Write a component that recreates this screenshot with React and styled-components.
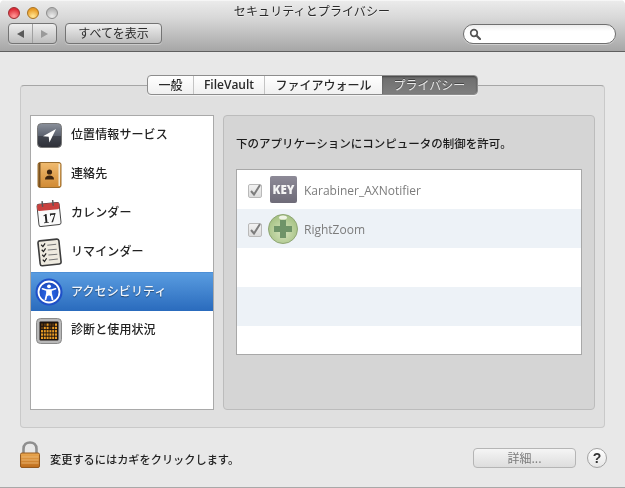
import React from 'react'
import styled, { createGlobalStyle } from 'styled-components'

const GlobalStyle = createGlobalStyle`
  html, body {
    margin: 0;
    padding: 0;
    background: #fff;
  }
  body {
    font-family: "Noto Sans CJK JP", "Liberation Sans", sans-serif;
  }
`

const Window = styled.div`
  width: 625px;
  height: 488px;
  display: flex;
  flex-direction: column;
  background: #e8e8e8;
  border-radius: 5px 5px 0 0;
  overflow: hidden;
  box-sizing: border-box;
  border-bottom: 1px solid #a8a8a8;
  filter: blur(0.3px);
`

const TitleBar = styled.div`
  height: 52px;
  flex: none;
  box-sizing: border-box;
  padding: 2px 9px 0 8px;
  background: linear-gradient(#ececec 0%, #d8d8d8 35%, #a6a6a6 100%);
  border-bottom: 1px solid #5f5f5f;
  box-shadow: inset 0 1px 0 #f6f6f6;
  display: flex;
  flex-direction: column;
`

const TitleRow = styled.div`
  height: 21px;
  display: flex;
  align-items: center;
`

const Lights = styled.div`
  display: flex;
  gap: 7px;
`

const Light = styled.span`
  width: 12px;
  height: 12px;
  border-radius: 50%;
  box-sizing: border-box;
  border: 1px solid ${p => p.$edge};
  background: radial-gradient(circle at 50% 85%, ${p => p.$glow} 10%, ${p => p.$color} 75%);
`

const Title = styled.div`
  flex: 1;
  text-align: center;
  font-size: 12px;
  letter-spacing: 0.1px;
  color: #2a2a2a;
  margin-right: 50px;
  margin-top: -5px;
  text-shadow: 0 1px 0 rgba(255, 255, 255, 0.5);
`

const ToolRow = styled.div`
  display: flex;
  align-items: center;
  height: 21px;
`

const NavGroup = styled.div`
  width: 49px;
  height: 21px;
  box-sizing: border-box;
  border: 1px solid #747474;
  border-radius: 4px;
  background: linear-gradient(#eeeeee, #bdbdbd);
  display: flex;
  box-shadow: 0 1px 0 rgba(255, 255, 255, 0.35);
`

const NavHalf = styled.div`
  flex: 1;
  display: flex;
  align-items: center;
  justify-content: center;
  & + & {
    border-left: 1px solid #a0a0a0;
  }
`

const Arrow = styled.span`
  width: 0;
  height: 0;
  border-top: 4px solid transparent;
  border-bottom: 4px solid transparent;
  ${p => (p.$right
    ? `border-left: 7px solid ${p.$color};`
    : `border-right: 7px solid ${p.$color};`)}
`

const ToolButton = styled.div`
  margin-left: 8px;
  width: 97px;
  height: 21px;
  box-sizing: border-box;
  border: 1px solid #747474;
  border-radius: 4px;
  background: linear-gradient(#eeeeee, #bdbdbd);
  box-shadow: 0 1px 0 rgba(255, 255, 255, 0.35);
  font-size: 12px;
  line-height: 18px;
  text-align: center;
  color: #2c2c2c;
`

const SearchBox = styled.div`
  margin-left: auto;
  width: 153px;
  height: 20px;
  box-sizing: border-box;
  border: 1px solid #6f6f6f;
  border-radius: 10px;
  background: linear-gradient(#ededed, #ffffff 35%);
  display: flex;
  align-items: center;
  padding-left: 5px;
  box-shadow: 0 1px 0 rgba(255, 255, 255, 0.4);
`

const Content = styled.div`
  flex: 1;
  display: flex;
  flex-direction: column;
  padding: 23px 20px 0;
`

const TabBar = styled.div`
  align-self: center;
  display: flex;
  height: 20px;
  margin: 0 0 -10px 0;
  position: relative;
  z-index: 1;
  box-sizing: border-box;
  border: 1px solid #8d8d8d;
  border-radius: 4px;
  background: linear-gradient(#ffffff, #f0f0f0);
  box-shadow: 0 1px 0 rgba(255, 255, 255, 0.6);
`

const Tab = styled.div`
  width: ${p => p.$width}px;
  font-family: ${p => (p.$latin ? '"Open Sans", sans-serif' : 'inherit')};
  font-size: 12px;
  font-weight: ${p => (p.$latin ? 600 : 500)};
  line-height: 17px;
  text-align: center;
  color: #2a2a2a;
  box-sizing: border-box;
  & + & {
    border-left: 1px solid #c4c4c4;
  }
  ${p => p.$active && `
    color: #e8e8e8;
    border-radius: 0 3px 3px 0;
    border-left: none !important;
    background: linear-gradient(#6d6d6d, #7f7f7f);
    box-shadow: inset 0 1px 2px rgba(0, 0, 0, 0.4);
    font-weight: 400;
    text-shadow: 0 -1px 0 rgba(0, 0, 0, 0.4);
  `}
`

const GroupBox = styled.div`
  height: 343px;
  box-sizing: border-box;
  padding: 29px 9px 0;
  border: 1px solid #c9c9c9;
  border-top-color: #a6a6a6;
  border-radius: 4px;
  background: #e0e0e0;
  display: flex;
  gap: 9px;
`

const Sidebar = styled.div`
  width: 184px;
  height: 295px;
  flex: none;
  box-sizing: border-box;
  border: 1px solid #a9a9a9;
  background: #fff;
`

const SideRow = styled.div`
  height: 39px;
  display: flex;
  align-items: center;
  padding-left: 4px;
  gap: 8px;
  font-size: 12px;
  font-weight: 500;
  letter-spacing: 0.1px;
  color: ${p => (p.$selected ? '#f2f6fb' : '#222')};
  ${p => p.$selected && `
    background: linear-gradient(#599ce0, #2a6bbd);
    border-top: 1px solid #4d8fd6;
    box-sizing: border-box;
    text-shadow: 0 1px 1px rgba(0, 0, 0, 0.45);
  `}
`

const SideLabel = styled.span`
  margin-bottom: 4px;
`

const IconSlot = styled.div`
  width: 28px;
  height: 28px;
  flex: none;
  display: flex;
  align-items: center;
  justify-content: center;
`

const RightPanel = styled.div`
  width: 372px;
  height: 295px;
  flex: none;
  box-sizing: border-box;
  padding: 0 12px;
  border: 1px solid #bcbcbc;
  border-radius: 4px;
  background: #d5d5d5;
`

const PanelLabel = styled.div`
  height: 53px;
  box-sizing: border-box;
  padding-top: 18px;
  font-size: 11.5px;
  font-weight: 500;
  color: #1c1c1c;
  line-height: 18px;
`

const AppTable = styled.div`
  width: 346px;
  height: 186px;
  box-sizing: border-box;
  border: 1px solid #a8a8a8;
  background: #fff;
  overflow: hidden;
`

const AppRow = styled.div`
  height: 39px;
  display: flex;
  align-items: center;
  padding-left: 11px;
  background: ${p => (p.$alt ? '#edf2f7' : '#fff')};
  font-family: "Open Sans", sans-serif;
  font-size: 12px;
  color: #7c7c7c;
`

const Check = styled.span`
  width: 14px;
  height: 14px;
  box-sizing: border-box;
  border: 1px solid #b9b9b9;
  border-radius: 2px;
  background: linear-gradient(#f2f2f2, #dcdcdc);
  display: flex;
  align-items: center;
  justify-content: center;
  margin: 3px 6px 0 0;
`

const AppName = styled.span`
  margin-top: 2px;
`

const AppIconSlot = styled.div`
  width: 30px;
  height: 30px;
  flex: none;
  display: flex;
  align-items: center;
  justify-content: center;
  margin-right: 6px;
`

const Footer = styled.div`
  flex: 1;
  display: flex;
  align-items: center;
  margin: 0 -2px 0 -1px;
  padding-bottom: 2px;
`

const LockSlot = styled.div`
  width: 22px;
  height: 28px;
  margin-top: -4px;
  flex: none;
`

const LockText = styled.div`
  margin-left: 9px;
  margin-top: 5px;
  font-size: 11.2px;
  font-weight: 500;
  color: #222;
`

const DetailButton = styled.div`
  margin-left: auto;
  margin-top: 3px;
  width: 103px;
  height: 20px;
  box-sizing: border-box;
  border: 1px solid #b5b5b5;
  border-radius: 4px;
  background: linear-gradient(#f5f5f5, #dddddd);
  font-size: 12px;
  line-height: 17px;
  text-align: center;
  color: #7b7b7b;
`

const HelpButton = styled.div`
  margin-left: 11px;
  margin-top: 3px;
  width: 20px;
  height: 20px;
  box-sizing: border-box;
  border: 1px solid #a2a2a2;
  border-radius: 50%;
  background: linear-gradient(#ffffff, #e6e6e6);
  font-family: "Liberation Sans", sans-serif;
  font-size: 14px;
  font-weight: 700;
  line-height: 18px;
  text-align: center;
  color: #333;
`

const SearchIcon = () => (
  <svg width="12" height="12" viewBox="0 0 12 12">
    <circle cx="5" cy="5" r="3.3" fill="none" stroke="#555" strokeWidth="1.7" />
    <path d="M7.5 7.5L11 11" stroke="#555" strokeWidth="2.2" strokeLinecap="round" />
  </svg>
)

const LocationIcon = () => (
  <svg width="25" height="25" viewBox="0 0 25 25">
    <defs>
      <linearGradient id="locBg" x1="0" y1="0" x2="0" y2="1">
        <stop offset="0" stopColor="#8a909b" />
        <stop offset="0.5" stopColor="#5d6370" />
        <stop offset="0.52" stopColor="#41454f" />
        <stop offset="1" stopColor="#2e3038" />
      </linearGradient>
    </defs>
    <rect x="0.5" y="0.5" width="24" height="24" rx="4" fill="url(#locBg)" stroke="#777" />
    <path d="M19 6L6 13.2L11.7 13.7L12.4 19.5Z" fill="#fff" />
  </svg>
)

const ContactsIcon = () => (
  <svg width="25" height="26" viewBox="0 0 25 26">
    <defs>
      <linearGradient id="bookBg" x1="0" y1="0" x2="0" y2="1">
        <stop offset="0" stopColor="#f0bb70" />
        <stop offset="1" stopColor="#d08a34" />
      </linearGradient>
    </defs>
    <rect x="1" y="0.5" width="23" height="25" rx="2" fill="url(#bookBg)" stroke="#9a6e30" />
    <rect x="1.500" y="1" width="2" height="24" fill="#7a5220" />
    <rect x="21.500" y="2" width="1.500" height="22" fill="#f3e7d0" />
    <circle cx="12.500" cy="10" r="2.600" fill="#3b2410" />
    <path d="M8 17.500C8 14.500 10 13.500 12.500 13.500S17 14.500 17 17.500Z" fill="#3b2410" />
  </svg>
)

const CalendarIcon = () => (
  <svg width="29" height="29" viewBox="0 0 29 29">
    <g transform="rotate(-6 14 15)">
      <rect x="3" y="4" width="23" height="23" rx="2" fill="#fafafa" stroke="#444" />
      <rect x="3" y="4" width="23" height="7" rx="2" fill="#c8413e" />
      <rect x="8" y="1" width="1.500" height="6" fill="#555" />
      <rect x="19" y="1" width="1.500" height="6" fill="#555" />
      <text x="14.500" y="24" textAnchor="middle" fontSize="14" fontWeight="700" fontFamily="'Liberation Serif', serif" fill="#222">17</text>
    </g>
  </svg>
)

const RemindersIcon = () => (
  <svg width="27" height="29" viewBox="0 0 27 29">
    <g transform="rotate(-6 13 14)">
      <rect x="3" y="2" width="21" height="25" rx="2" fill="#eeeadf" stroke="#3c3c3c" strokeWidth="1.600" />
      {[7, 12, 17, 22].map(y => (
        <g key={y}>
          <path d={`M6 ${y - 1}L7.500 ${y + 1}L10 ${y - 2}`} fill="none" stroke="#222" strokeWidth="1.200" />
          <path d={`M12 ${y}H21`} stroke="#777" strokeWidth="1" />
        </g>
      ))}
    </g>
  </svg>
)

const AccessIcon = () => (
  <svg width="28" height="28" viewBox="0 0 28 28">
    <defs>
      <radialGradient id="accessBg" cx="0.5" cy="0.6" r="0.6">
        <stop offset="0" stopColor="#2f6ff0" />
        <stop offset="1" stopColor="#1a46b8" />
      </radialGradient>
    </defs>
    <circle cx="14" cy="14" r="13.500" fill="#1f50c8" />
    <circle cx="14" cy="14" r="10.500" fill="url(#accessBg)" stroke="#fff" strokeWidth="1.800" />
    <circle cx="14" cy="8.300" r="1.900" fill="#fff" />
    <path d="M7.500 10.800L12 12.200V15.500L10.500 21.500M20.500 10.800L16 12.200V15.500L17.500 21.500M12 12.200H16M14 16L12.500 17M14 16L15.500 17" fill="none" stroke="#fff" strokeWidth="1.700" strokeLinecap="round" strokeLinejoin="round" />
    <rect x="12" y="12" width="4" height="4.500" fill="#fff" />
  </svg>
)

const DiagnosticsIcon = () => (
  <svg width="26" height="26" viewBox="0 0 26 26">
    <rect x="0.500" y="0.500" width="25" height="25" rx="4" fill="#b8b8b8" stroke="#8a8a8a" />
    <rect x="3.500" y="3.500" width="19" height="19" rx="1" fill="#1c1410" />
    {[0, 1, 2, 3, 4, 5].map(col => (
      [0, 1, 2, 3, 4].map(row => (
        <rect
          key={`${col}-${row}`}
          x={5 + col * 2.8}
          y={5.500 + row * 3.300}
          width="2"
          height="2.300"
          fill={row + (col % 3) > 1 ? '#e89a24' : '#5e3a12'}
        />
      ))
    ))}
  </svg>
)

const KeyIcon = () => (
  <svg width="27" height="27" viewBox="0 0 27 27">
    <defs>
      <linearGradient id="keyBg" x1="0" y1="0" x2="0" y2="1">
        <stop offset="0" stopColor="#8d8a97" />
        <stop offset="1" stopColor="#6e6b78" />
      </linearGradient>
    </defs>
    <rect x="0" y="0" width="27" height="27" rx="2" fill="url(#keyBg)" />
    <text x="13.500" y="18" textAnchor="middle" fontSize="11.500" fontWeight="800" fontFamily="'Open Sans', sans-serif" fill="#f4f4f4">KEY</text>
  </svg>
)

const PlusIcon = () => (
  <svg width="30" height="30" viewBox="0 0 30 30">
    <defs>
      <radialGradient id="plusBg" cx="0.5" cy="0.6" r="0.6">
        <stop offset="0" stopColor="#d6e4bd" />
        <stop offset="1" stopColor="#a3c081" />
      </radialGradient>
    </defs>
    <circle cx="15" cy="15" r="14.500" fill="url(#plusBg)" stroke="#8ea574" />
    <path d="M12 6H18V12H24V18H18V24H12V18H6V12H12Z" fill="#6f9468" />
    <ellipse cx="15" cy="3.500" rx="4" ry="2" fill="#eef3e4" />
  </svg>
)

const LockIcon = () => (
  <svg width="22" height="28" viewBox="0 0 22 28">
    <defs>
      <linearGradient id="lockBody" x1="0" y1="0" x2="0" y2="1">
        <stop offset="0" stopColor="#eba850" />
        <stop offset="1" stopColor="#bd6c1c" />
      </linearGradient>
    </defs>
    <path d="M4.500 13V8C4.500 3.500 7.500 1.500 11 1.500S17.500 3.500 17.500 8V13" fill="none" stroke="#8e8e8e" strokeWidth="2.600" />
    <rect x="1.500" y="12" width="19" height="14.500" rx="1.500" fill="url(#lockBody)" stroke="#94591f" />
    <path d="M2.500 16H19.500M2.500 19H19.500M2.500 22H19.500" stroke="#f0bd7c" strokeWidth="0.800" />
  </svg>
)

const CheckMark = () => (
  <svg width="12" height="12" viewBox="0 0 12 12" overflow="visible">
    <path d="M2 6L5 9.500L11 0" fill="none" stroke="#7d7d7d" strokeWidth="2" />
  </svg>
)

const sideItems = [
  { label: '位置情報サービス', icon: <LocationIcon /> },
  { label: '連絡先', icon: <ContactsIcon /> },
  { label: 'カレンダー', icon: <CalendarIcon /> },
  { label: 'リマインダー', icon: <RemindersIcon /> },
  { label: 'アクセシビリティ', icon: <AccessIcon />, selected: true },
  { label: '診断と使用状況', icon: <DiagnosticsIcon /> },
]

const tabs = [
  { label: '一般', width: 45 },
  { label: 'FileVault', width: 71, latin: true },
  { label: 'ファイアウォール', width: 118 },
  { label: 'プライバシー', width: 95, active: true },
]

export default function App() {
  return (
    <>
      <GlobalStyle />
      <Window>
        <TitleBar>
          <TitleRow>
            <Lights>
              <Light $color="#dc2a36" $glow="#ff8f8f" $edge="#9c2a30" />
              <Light $color="#e89a22" $glow="#ffe08a" $edge="#a87222" />
              <Light $color="#b5b5b5" $glow="#e8e8e8" $edge="#8d8d8d" />
            </Lights>
            <Title>セキュリティとプライバシー</Title>
          </TitleRow>
          <ToolRow>
            <NavGroup>
              <NavHalf><Arrow $color="#5a5a5a" /></NavHalf>
              <NavHalf><Arrow $right $color="#9a9a9a" /></NavHalf>
            </NavGroup>
            <ToolButton>すべてを表示</ToolButton>
            <SearchBox><SearchIcon /></SearchBox>
          </ToolRow>
        </TitleBar>
        <Content>
          <TabBar>
            {tabs.map(t => (
              <Tab key={t.label} $width={t.width} $latin={t.latin} $active={t.active}>{t.label}</Tab>
            ))}
          </TabBar>
          <GroupBox>
            <Sidebar>
              {sideItems.map(item => (
                <SideRow key={item.label} $selected={item.selected}>
                  <IconSlot>{item.icon}</IconSlot>
                  <SideLabel>{item.label}</SideLabel>
                </SideRow>
              ))}
            </Sidebar>
            <RightPanel>
              <PanelLabel>下のアプリケーションにコンピュータの制御を許可。</PanelLabel>
              <AppTable>
                <AppRow>
                  <Check><CheckMark /></Check>
                  <AppIconSlot><KeyIcon /></AppIconSlot>
                  <AppName>Karabiner_AXNotifier</AppName>
                </AppRow>
                <AppRow $alt>
                  <Check><CheckMark /></Check>
                  <AppIconSlot><PlusIcon /></AppIconSlot>
                  <AppName>RightZoom</AppName>
                </AppRow>
                <AppRow />
                <AppRow $alt />
                <AppRow />
              </AppTable>
            </RightPanel>
          </GroupBox>
          <Footer>
            <LockSlot><LockIcon /></LockSlot>
            <LockText>変更するにはカギをクリックします。</LockText>
            <DetailButton>詳細...</DetailButton>
            <HelpButton>?</HelpButton>
          </Footer>
        </Content>
      </Window>
    </>
  )
}
